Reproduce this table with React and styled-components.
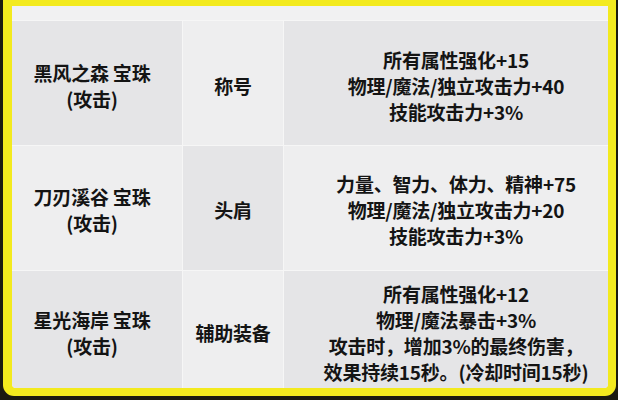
import React from "react";
import styled, { createGlobalStyle } from "styled-components";

const Global = createGlobalStyle`
  *, *::before, *::after { box-sizing: border-box; }
  html, body { margin: 0; padding: 0; background: #1b1a10; overflow: hidden; }
`;

const Page = styled.div`
  width: 618px;
  height: 400px;
  padding: 0 2px 4px 3px;
  background: #1b1a10;
  display: flex;
  flex-direction: column;
`;

const Frame = styled.div`
  flex: 1;
  min-height: 0;
  padding: 6px 8px 8px 9px;
  border-radius: 0 0 11px 11px;
  background: #f3ea1e;
  display: flex;
  flex-direction: column;
`;

const Table = styled.div`
  flex: 1;
  min-height: 0;
  border-radius: 0 0 4px 4px;
  background: #f6f6f6;
  overflow: hidden;
  display: grid;
  grid-template-columns: 170px 101px 1fr;
  grid-template-rows: 14px 125px 125px minmax(0, 1fr);
  font-family: "Noto Sans CJK SC", "Noto Sans", sans-serif;
  font-weight: 700;
  color: #141414;
`;

const Band = styled.div`
  grid-column: 1 / -1;
  background: #f1f1f2;
`;

const Cell = styled.div`
  display: flex;
  flex-direction: column;
  align-items: center;
  justify-content: center;
  text-align: center;
  font-size: 19px;
  line-height: 26px;
  letter-spacing: -0.2px;
  white-space: nowrap;
  min-height: 0;
  overflow: hidden;
  background: ${(p) => (p.$dark ? "#e5e5e7" : "#eeeeef")};
  border-top: 1px solid #f6f6f6;
  border-left: ${(p) => (p.$first ? "none" : "1px solid #f6f6f6")};
  padding-top: ${(p) => p.$top}px;
  padding-left: ${(p) => p.$left || 0}px;
  padding-right: ${(p) => p.$right || 0}px;
`;

const rows = [
  {
    name: ["黑风之森 宝珠", "(攻击)"],
    slot: "称号",
    effects: ["所有属性强化+15", "物理/魔法/独立攻击力+40", "技能攻击力+3%"],
    top: 6,
  },
  {
    name: ["刀刃溪谷 宝珠", "(攻击)"],
    slot: "头肩",
    effects: ["力量、智力、体力、精神+75", "物理/魔法/独立攻击力+20", "技能攻击力+3%"],
    top: 4,
  },
  {
    name: ["星光海岸 宝珠", "(攻击)"],
    slot: "辅助装备",
    effects: [
      "所有属性强化+12",
      "物理/魔法暴击+3%",
      "攻击时，增加3%的最终伤害，",
      "效果持续15秒。(冷却时间15秒)",
    ],
    top: 6,
  },
];

export default function App() {
  return (
    <Page>
      <Global />
      <Frame>
        <Table>
          <Band />
          {rows.map((r, i) => {
            const dark = i % 2 === 0;
            return (
              <React.Fragment key={i}>
                <Cell $first $dark={dark} $top={r.top} $right={10}>
                  {r.name.map((t) => (
                    <span key={t}>{t}</span>
                  ))}
                </Cell>
                <Cell $dark={!dark} $top={r.top}>
                  <span>{r.slot}</span>
                </Cell>
                <Cell $dark={dark} $top={r.top} $left={20}>
                  {r.effects.map((t) => (
                    <span key={t}>{t}</span>
                  ))}
                </Cell>
              </React.Fragment>
            );
          })}
        </Table>
      </Frame>
    </Page>
  );
}
